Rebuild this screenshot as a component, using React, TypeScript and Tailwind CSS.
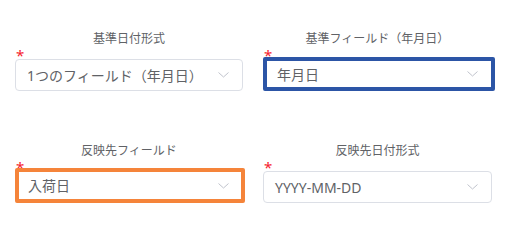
import { FC } from "react";

type Highlight = "none" | "blue" | "orange";

const Chevron: FC = () => (
  <svg width="11" height="6" viewBox="0 0 11 6" fill="none" className="shrink-0">
    <path d="M0.5 0.5L5.5 5L10.5 0.5" stroke="#c0c4cc" strokeWidth="1" />
  </svg>
);

const Field: FC<{ label: string; value: string; highlight?: Highlight }> = ({
  label,
  value,
  highlight = "none",
}) => {
  const box =
    highlight === "blue"
      ? "w-[232px] h-[35px] -mt-[2px] border-4 border-[#2c55a6] rounded-[2px] pl-[10px] pr-[13px]"
      : highlight === "orange"
        ? "w-[230px] h-[36px] -mt-[3px] border-4 border-[#f5843a] rounded-[2px] pl-[9px] pr-[12px]"
        : "w-full h-[32px] border border-[#dcdfe6] rounded-[4px] pl-[11px] pr-[13px]";

  return (
    <div className="flex flex-col h-[60px]">
      <div className="h-[16px] text-[12px] leading-[16px] text-center text-[#606266]">{label}</div>
      <div className="h-[12px] pl-[1px] pt-[1px] text-[15px] leading-[14px] text-[#f5222d]">*</div>
      <div className={`flex items-center justify-between bg-white ${box}`}>
        <span className="text-[14px] text-[#606266] whitespace-nowrap">{value}</span>
        <Chevron />
      </div>
    </div>
  );
};

const App: FC = () => {
  return (
    <div className="min-h-screen bg-white pt-[31px] pl-[15px] font-['Noto_Sans','Noto_Sans_CJK_JP',sans-serif]">
      <div className="grid grid-cols-[228px_229px] gap-x-[20px] gap-y-[52px]">
        <Field label="基準日付形式" value="1つのフィールド（年月日）" />
        <Field label="基準フィールド（年月日）" value="年月日" highlight="blue" />
        <Field label="反映先フィールド" value="入荷日" highlight="orange" />
        <Field label="反映先日付形式" value="YYYY-MM-DD" />
      </div>
    </div>
  );
};

export default App;
